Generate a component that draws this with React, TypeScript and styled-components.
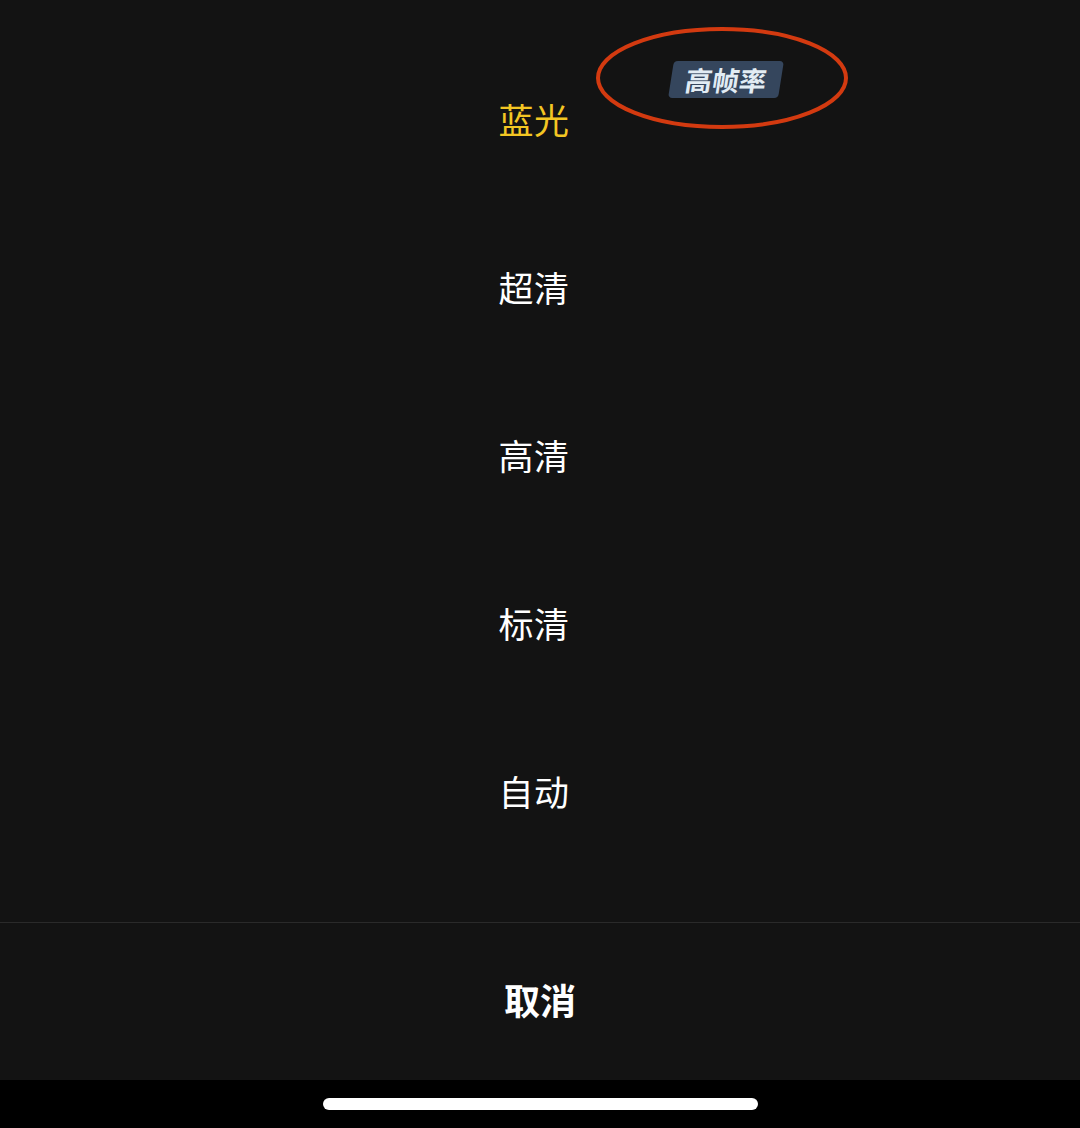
import styled, { createGlobalStyle } from 'styled-components'

const GlobalStyle = createGlobalStyle`
  html, body {
    margin: 0;
    padding: 0;
    background: #000;
  }
  body {
    font-family: "Noto Sans CJK SC", "Noto Sans", sans-serif;
  }
`

const Sheet = styled.div`
  width: 1080px;
  height: 1128px;
  background: #131313;
  display: flex;
  flex-direction: column;
`

const OptionList = styled.div`
  display: flex;
  flex-direction: column;
  padding: 34px 0 48px;
  border-bottom: 1px solid #2a2a2a;
`

const OptionRow = styled.div`
  height: 168px;
  display: flex;
  align-items: center;
  justify-content: center;
  padding-right: 12px;
`

const Label = styled.span<{ $active?: boolean }>`
  position: relative;
  font-size: 35px;
  line-height: 1;
  letter-spacing: 0.5px;
  color: ${p => (p.$active ? '#f3c623' : '#ffffff')};
`

const Badge = styled.span`
  position: absolute;
  left: 173px;
  top: -40px;
  width: 110px;
  height: 37px;
  display: flex;
  align-items: center;
  justify-content: center;
  background: #35465d;
  border-radius: 4px;
  transform: skewX(-9deg);
  font-size: 27px;
  font-weight: 700;
  color: #e2ecf4;
  letter-spacing: 0;
`

const Circle = styled.svg`
  position: absolute;
  left: 97px;
  top: -75px;
  width: 254px;
  height: 104px;
  overflow: visible;
`

const CancelRow = styled.div`
  flex: 1;
  display: flex;
  align-items: center;
  justify-content: center;
  padding-bottom: 6px;
  font-size: 36px;
  font-weight: 700;
  color: #ffffff;
`

const HomeBar = styled.div`
  height: 48px;
  background: #000;
  display: flex;
  justify-content: center;
  padding-top: 18px;
  box-sizing: border-box;
`

const Indicator = styled.div`
  width: 435px;
  height: 12px;
  border-radius: 6px;
  background: #ffffff;
`

const OPTIONS = [
  { id: 'bluray', name: '蓝光', active: true },
  { id: 'super', name: '超清' },
  { id: 'high', name: '高清' },
  { id: 'std', name: '标清' },
  { id: 'auto', name: '自动' },
]

const App = () => {
  return (
    <>
      <GlobalStyle />
      <Sheet>
        <OptionList>
          {OPTIONS.map(opt => (
            <OptionRow key={opt.id}>
              <Label $active={opt.active}>
                {opt.name}
                {opt.active && (
                  <>
                    <Badge>高帧率</Badge>
                    <Circle viewBox="0 0 254 104">
                      <ellipse cx="127" cy="52" rx="124" ry="49" fill="none" stroke="#d33a10" strokeWidth="4" />
                    </Circle>
                  </>
                )}
              </Label>
            </OptionRow>
          ))}
        </OptionList>
        <CancelRow>取消</CancelRow>
        <HomeBar>
          <Indicator />
        </HomeBar>
      </Sheet>
    </>
  )
}

export default App
